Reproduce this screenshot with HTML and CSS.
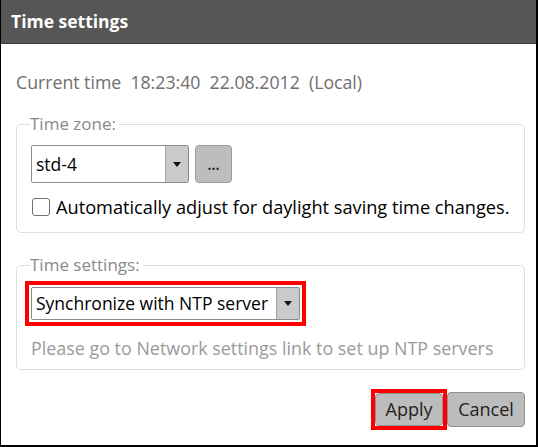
FILE: index.html
```html
<!DOCTYPE html>
<html>
<head>
<meta charset="utf-8">
<link rel="stylesheet" href="styles.css">
</head>
<body>
<div class="window">
  <div class="titlebar">Time settings</div>
  <div class="content">
    <div class="current">Current time&nbsp;&nbsp;18:23:40&nbsp;&nbsp;22.08.2012&nbsp;&nbsp;(Local)</div>
    <fieldset class="group group-zone">
      <legend>Time zone:</legend>
      <div class="row">
        <div class="select select-zone">
          <span class="select-value">std-4</span>
          <span class="select-arrow"><span class="tri"></span></span>
        </div>
        <div class="dots-btn">...</div>
      </div>
      <label class="check-row">
        <span class="checkbox"></span>
        <span>Automatically adjust for daylight saving time changes.</span>
      </label>
    </fieldset>
    <fieldset class="group group-time">
      <legend>Time settings:</legend>
      <div class="highlight">
        <div class="select select-ntp">
          <span class="select-value">Synchronize with NTP server</span>
          <span class="select-arrow"><span class="tri"></span></span>
        </div>
      </div>
      <div class="note">Please go to Network settings link to set up NTP servers</div>
    </fieldset>
    <div class="actions">
      <div class="highlight highlight-btn"><div class="btn">Apply</div></div>
      <div class="btn btn-cancel">Cancel</div>
    </div>
  </div>
</div>
</body>
</html>
```

FILE: styles.css
```css
html, body {
  margin: 0;
  padding: 0;
  background: #fff;
}
.window {
  width: 538px;
  height: 447px;
  box-sizing: border-box;
  border-left: 1px solid #000;
  border-right: 2px solid #000;
  border-bottom: 2px solid #000;
  font-family: "Open Sans", "Noto Sans", sans-serif;
  font-size: 18px;
  display: flex;
  flex-direction: column;
}
.titlebar {
  height: 43px;
  background: #565656;
  color: #fff;
  font-weight: bold;
  font-size: 17.5px;
  line-height: 43px;
  padding-left: 10px;
  border-bottom: 1px solid #3a3a3a;
}
.content {
  padding: 26px 11px 0 15px;
  display: flex;
  flex-direction: column;
}
.current {
  color: #6e6e6e;
  font-size: 17.7px;
  line-height: 24px;
}
.group {
  margin: 19px 0 0 0;
  border: 1px solid #d9dee2;
  border-radius: 5px;
  padding: 10px 4px 13px 14px;
  min-width: 0;
}
.group legend {
  color: #8a8a8a;
  font-size: 17px;
  padding: 0 3px 0 0;
  margin-left: -1px;
  line-height: 22px;
}
.group-time {
  margin-top: 21px;
  padding-top: 5px;
  padding-bottom: 9px;
}
.row {
  display: flex;
  gap: 6px;
}
.select {
  display: flex;
  align-items: stretch;
  height: 38px;
  box-sizing: border-box;
  border: 1px solid #8c8c8c;
  border-radius: 2px;
  background: #fff;
  color: #000;
  font-size: 17.5px;
}
.select-zone {
  width: 158px;
}
.select-value {
  flex: 1;
  padding-left: 4px;
  line-height: 36px;
  white-space: nowrap;
  overflow: hidden;
}
.select-arrow {
  width: 22px;
  flex: none;
  background: #cacaca;
  border-left: 1px solid #a0a0a0;
  display: flex;
  align-items: center;
  justify-content: center;
}
.tri {
  width: 0;
  height: 0;
  border-left: 4px solid transparent;
  border-right: 4px solid transparent;
  border-top: 5px solid #111;
}
.dots-btn {
  width: 37px;
  height: 38px;
  box-sizing: border-box;
  background: #bdbdbd;
  border: 1px solid #9a9a9a;
  border-radius: 4px;
  color: #2a2a2a;
  font-size: 14px;
  font-weight: bold;
  text-align: center;
  line-height: 38px;
}
.check-row {
  display: flex;
  align-items: center;
  gap: 6px;
  margin-top: 12px;
  color: #000;
  font-size: 18.2px;
  line-height: 24px;
  white-space: nowrap;
}
.checkbox {
  width: 18px;
  height: 18px;
  flex: none;
  box-sizing: border-box;
  border: 1px solid #6f6f6f;
  border-radius: 3px;
  background: #fff;
  margin-left: 1px;
}
.highlight {
  border: 4px solid #f00;
  padding: 2px;
  margin-left: -6px;
}
.group-time .highlight {
  display: flex;
  width: fit-content;
}
.select-ntp {
  width: 269px;
  height: 33px;
}
.select-ntp .select-value {
  line-height: 31px;
}
.note {
  color: #9a9a9a;
  font-size: 17.9px;
  margin-top: 10px;
  line-height: 24px;
  white-space: nowrap;
}
.actions {
  display: flex;
  justify-content: flex-end;
  align-items: center;
  margin-top: 19px;
}
.highlight-btn {
  margin-left: 0;
  padding: 0;
  display: flex;
}
.btn {
  height: 33px;
  width: 68px;
  box-sizing: border-box;
  text-align: center;
  background: #bcbcbc;
  border: 1px solid #8f8f8f;
  border-radius: 4px;
  color: #222;
  font-size: 18px;
  line-height: 31px;
}
.btn-cancel {
  height: 35px;
  line-height: 33px;
  width: 78px;
}
```
